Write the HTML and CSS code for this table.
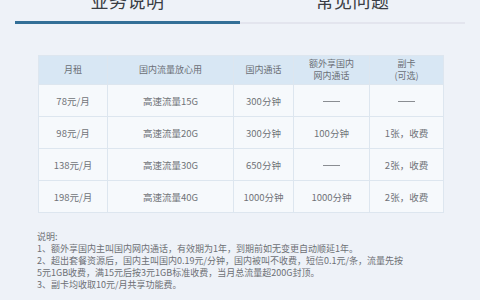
FILE: index.html
```html
<!DOCTYPE html>
<html lang="zh">
<head>
<meta charset="utf-8">
<link rel="stylesheet" href="styles.css">
</head>
<body>
<div class="page">
  <div class="tabs">
    <div class="tab active"><span class="tab-label">业务说明</span><i class="tab-bar"></i></div>
    <div class="tab"><span class="tab-label">常见问题</span><i class="tab-bar"></i></div>
  </div>
  <div class="panel">
    <table class="plans">
      <colgroup>
        <col class="c1"><col class="c2"><col class="c3"><col class="c4"><col class="c5">
      </colgroup>
      <thead>
        <tr>
          <th>月租</th>
          <th>国内流量放心用</th>
          <th>国内通话</th>
          <th>额外享国内<br>网内通话</th>
          <th>副卡<br>(可选)</th>
        </tr>
      </thead>
      <tbody>
        <tr><td>78元/月</td><td>高速流量15G</td><td>300分钟</td><td><span class="dash"></span></td><td><span class="dash"></span></td></tr>
        <tr><td>98元/月</td><td>高速流量20G</td><td>300分钟</td><td>100分钟</td><td>1张，收费</td></tr>
        <tr><td>138元/月</td><td>高速流量30G</td><td>650分钟</td><td><span class="dash"></span></td><td>2张，收费</td></tr>
        <tr><td>198元/月</td><td>高速流量40G</td><td>1000分钟</td><td>1000分钟</td><td>2张，收费</td></tr>
      </tbody>
    </table>
    <div class="notes">
      <div class="line">说明:</div>
      <div class="line">1、额外享国内主叫国内网内通话，有效期为1年，到期前如无变更自动顺延1年。</div>
      <div class="line">2、超出套餐资源后，国内主叫国内0.19元/分钟，国内被叫不收费，短信0.1元/条，流量先按</div>
      <div class="line">5元1GB收费，满15元后按3元1GB标准收费，当月总流量超200G封顶。</div>
      <div class="line">3、副卡均收取10元/月共享功能费。</div>
    </div>
  </div>
</div>
</body>
</html>
```

FILE: styles.css
```css
html, body {
  margin: 0;
  padding: 0;
}
body {
  width: 480px;
  height: 300px;
  overflow: hidden;
  background: #eef2f8;
  font-family: "Noto Sans CJK SC", "Noto Sans", sans-serif;
}
.page {
  display: flex;
  flex-direction: column;
}
.tabs {
  display: flex;
  padding: 0 15px;
  margin-top: -10px;
}
.tab {
  flex: 1;
  display: flex;
  flex-direction: column;
  align-items: center;
}
.tab-label {
  font-size: 18px;
  line-height: 20px;
  height: 20px;
  color: #3a3d44;
  letter-spacing: 0.5px;
}
.tab-bar {
  display: block;
  align-self: stretch;
  height: 2px;
  margin-top: 12px;
  background: #e3e5ee;
}
.tab.active .tab-bar {
  height: 3px;
  margin-top: 11px;
  background: #336f97;
}
.panel {
  margin: 31px 20px 0 38px;
  display: flex;
  flex-direction: column;
}
.plans {
  width: 405px;
  border-collapse: collapse;
  table-layout: fixed;
  font-size: 9.5px;
  color: #707378;
}
.c1 { width: 69px; }
.c2 { width: 126px; }
.c3 { width: 60px; }
.c4 { width: 76px; }
.c5 { width: 74px; }
.plans th,
.plans td {
  border: 1px solid #dde6ef;
  text-align: center;
  padding: 0;
  font-weight: normal;
}
.plans th {
  background: #d8e7f4;
  height: 28px;
  line-height: 12px;
  font-size: 9px;
  color: #6b6f76;
}
.plans td {
  background: #f6f9fc;
  height: 31px;
}
.dash {
  display: inline-block;
  width: 17px;
  height: 1px;
  background: #8a8d92;
  vertical-align: middle;
}
.notes {
  margin-top: 18px;
  margin-left: -1px;
  font-size: 9px;
  line-height: 12px;
  color: #6d7075;
}
.line {
  white-space: nowrap;
}
```
